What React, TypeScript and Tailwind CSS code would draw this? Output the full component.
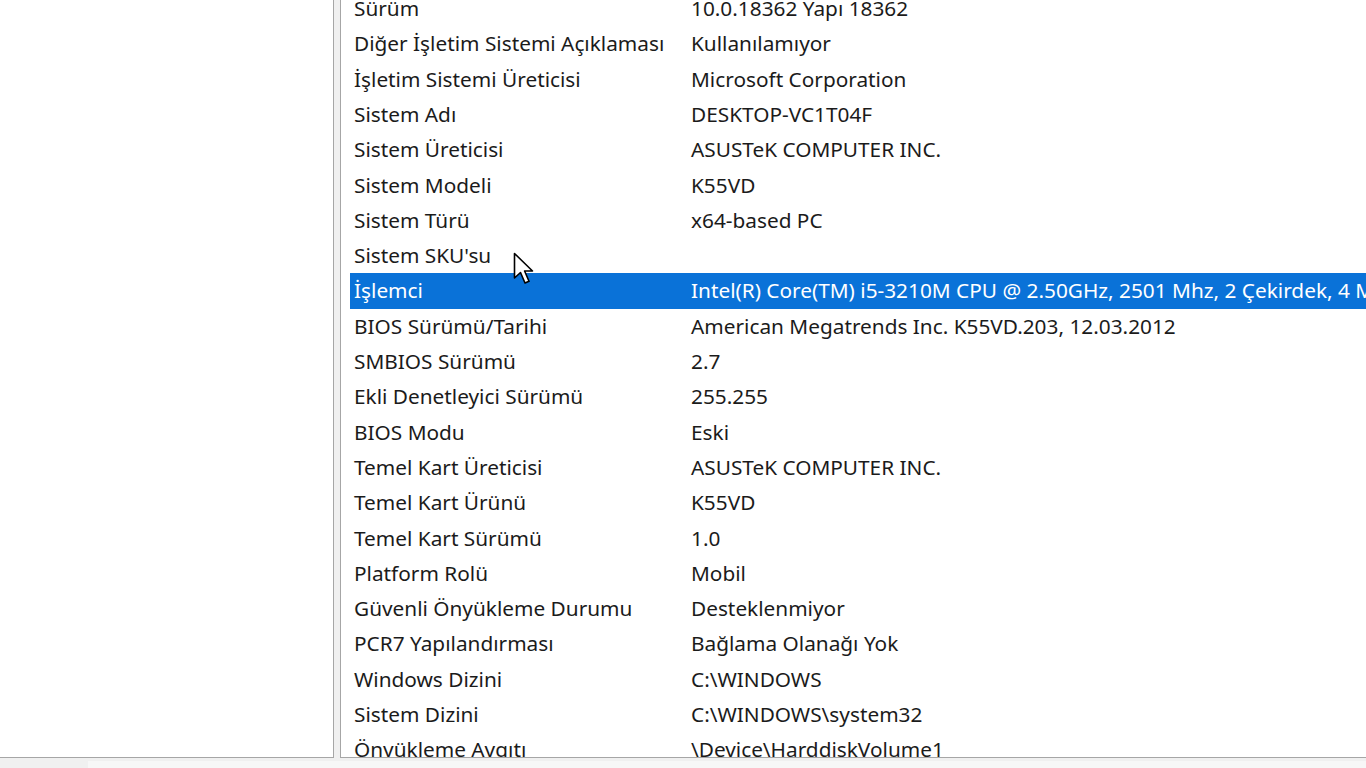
import React from "react";

const rows: [string, string][] = [
  ["Sürüm", "10.0.18362 Yapı 18362"],
  ["Diğer İşletim Sistemi Açıklaması", "Kullanılamıyor"],
  ["İşletim Sistemi Üreticisi", "Microsoft Corporation"],
  ["Sistem Adı", "DESKTOP-VC1T04F"],
  ["Sistem Üreticisi", "ASUSTeK COMPUTER INC."],
  ["Sistem Modeli", "K55VD"],
  ["Sistem Türü", "x64-based PC"],
  ["Sistem SKU'su", ""],
  ["İşlemci", "Intel(R) Core(TM) i5-3210M CPU @ 2.50GHz, 2501 Mhz, 2 Çekirdek, 4 Mantıksal İşlemci"],
  ["BIOS Sürümü/Tarihi", "American Megatrends Inc. K55VD.203, 12.03.2012"],
  ["SMBIOS Sürümü", "2.7"],
  ["Ekli Denetleyici Sürümü", "255.255"],
  ["BIOS Modu", "Eski"],
  ["Temel Kart Üreticisi", "ASUSTeK COMPUTER INC."],
  ["Temel Kart Ürünü", "K55VD"],
  ["Temel Kart Sürümü", "1.0"],
  ["Platform Rolü", "Mobil"],
  ["Güvenli Önyükleme Durumu", "Desteklenmiyor"],
  ["PCR7 Yapılandırması", "Bağlama Olanağı Yok"],
  ["Windows Dizini", "C:\\WINDOWS"],
  ["Sistem Dizini", "C:\\WINDOWS\\system32"],
  ["Önyükleme Aygıtı", "\\Device\\HarddiskVolume1"],
];

export default function App() {
  return (
    <div
      className="w-[1366px] h-[768px] bg-[#f0f0f0] flex flex-col overflow-hidden relative"
      style={{ fontFamily: '"Noto Sans", "Open Sans", sans-serif' }}
    >
      <div className="flex h-[758px]">
        <div className="w-[334px] bg-white border-r border-b border-[#a6a6a6]" />
        <div className="w-[6px]" />
        <div className="flex-1 bg-white border-l border-b border-[#a6a6a6] overflow-hidden">
          <div className="mt-[-9px] pl-[9px] flex flex-col">
            {rows.map(([k, v], i) => {
              const sel = i === 8;
              return (
                <div
                  key={i}
                  className={
                    "flex items-center h-[35.3px] shrink-0 whitespace-nowrap text-[20.8px] " +
                    (sel ? "bg-[#0a72d8] text-white" : "text-[#1b1b1b]")
                  }
                >
                  <div className="w-[341px] shrink-0 pl-[4px]">{k}</div>
                  <div className="shrink-0">{v}</div>
                </div>
              );
            })}
          </div>
        </div>
      </div>
      <div className="flex-1 flex">
        <div className="w-[88px]" />
        <div className="flex-1 mt-[3px] bg-[#f7f7f7]" />
      </div>
      <svg
        className="absolute left-[513px] top-[252px]"
        width="24"
        height="36"
        viewBox="0 0 24 36"
      >
        <path
          d="M1.5 1.5 L1.5 26 L7.5 20.5 L12 31 L16 29.3 L11.6 19 L19.5 19 Z"
          fill="white"
          stroke="black"
          strokeWidth="1.6"
          strokeLinejoin="round"
        />
      </svg>
    </div>
  );
}
